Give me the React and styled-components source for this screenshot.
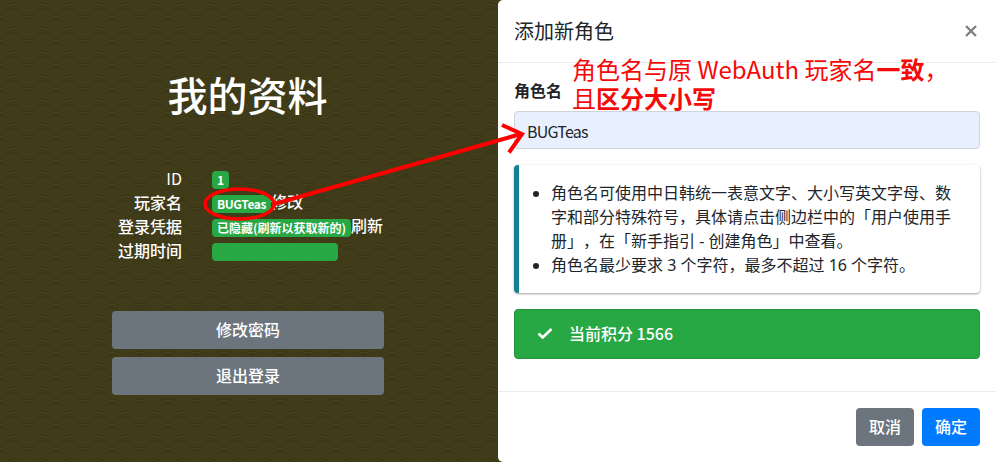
import React from 'react';
import styled, { createGlobalStyle } from 'styled-components';

const wave = encodeURIComponent(
  `<svg xmlns="http://www.w3.org/2000/svg" width="28" height="24" fill="none" stroke="#29260c" stroke-width="1">
    <path d="M3 9Q14-3 25 9M7 10Q14 1 21 10M11 10Q14 6 17 10"/>
    <path d="M-11 21Q0 9 11 21M-7 22Q0 13 7 22M-3 22Q0 18 3 22M17 21Q28 9 39 21M21 22Q28 13 35 22M25 22Q28 18 31 22"/>
    <path stroke="#574a24" stroke-width=".8" d="M3 10Q14-2 25 10M-11 22Q0 10 11 22M17 22Q28 10 39 22"/>
  </svg>`
);

const GlobalStyle = createGlobalStyle`
  *, *::before, *::after { box-sizing: border-box; }
  body {
    margin: 0;
    overflow: hidden;
    font: 400 16px/24px "Noto Sans", "Noto Sans CJK SC", sans-serif;
    color: #212529;
  }
`;

const Page = styled.div`
  position: relative;
  display: flex;
  width: 996px;
  height: 462px;
  background: #3c3918;
`;

const Profile = styled.section`
  width: 498px;
  padding-top: 64px;
  color: #fff;
  background: #403c1a;
  position: relative;
  isolation: isolate;
  &::before {
    content: '';
    position: absolute;
    inset: 0;
    z-index: -1;
    opacity: 0.5;
    background: url("data:image/svg+xml,${wave}");
  }
`;

const ProfileTitle = styled.h1`
  margin: 0 0 42px;
  padding-right: 3px;
  font: 500 40px/60px "Noto Sans CJK SC", sans-serif;
  text-align: center;
`;

const Details = styled.dl`
  display: grid;
  grid-template-columns: 182px 1fr;
  column-gap: 30px;
  grid-auto-rows: 24px;
  margin: 0 0 49px;
`;

const Label = styled.dt`
  text-align: right;
  font-family: "Noto Sans CJK SC", sans-serif;
  font-weight: ${(p) => (p.$light ? 400 : 500)};
`;

const Value = styled.dd`
  display: flex;
  align-items: center;
  margin: 0;
  font-weight: 500;
`;

const Badge = styled.span`
  display: inline-flex;
  align-items: center;
  height: 18px;
  width: ${(p) => p.$width}px;
  padding: 0 5px;
  margin-top: 3px;
  border-radius: 4px;
  background: #28a745;
  font-family: "Noto Sans CJK SC", sans-serif;
  font-size: 12px;
  font-weight: 700;
  letter-spacing: ${(p) => (p.$tight ? '-0.4px' : 'normal')};
  white-space: nowrap;
`;

const Actions = styled.div`
  display: flex;
  flex-direction: column;
  gap: 8px;
  width: 272px;
  margin-left: 112px;
`;

const Button = styled.button`
  height: 38px;
  padding: 0 13px 2px;
  border: 0;
  border-radius: 4px;
  color: #fff;
  background: ${(p) => (p.$primary ? '#007bff' : '#6c757d')};
  font: 500 16px/24px "Noto Sans CJK SC", sans-serif;
`;

const Dialog = styled.section`
  display: flex;
  flex-direction: column;
  width: 498px;
  background: #fff;
  border-radius: 5px 0 0 5px;
`;

const DialogHeader = styled.header`
  display: flex;
  align-items: center;
  justify-content: space-between;
  height: 63px;
  padding: 0 17px 0 16px;
  border-bottom: 1px solid #e9ecef;
`;

const DialogTitle = styled.h2`
  margin: 0;
  font: 400 20px/30px "Noto Sans CJK SC", sans-serif;
`;

const CloseIcon = styled.svg`
  width: 16px;
  height: 16px;
  stroke: #7f7f7f;
  stroke-width: 2.3;
`;

const DialogBody = styled.div`
  flex: 1;
  padding: 16px 16px 0;
`;

const FieldLabel = styled.label`
  display: block;
  margin-bottom: 8px;
  font-weight: 700;
`;

const Field = styled.input`
  display: block;
  width: 100%;
  height: 38px;
  padding: 1px 12px 0;
  border: 1px solid #ced4da;
  border-radius: 4px;
  background: #e8f0fe;
  color: #212529;
  font: 16px "Noto Sans CJK SC", sans-serif;
  letter-spacing: -0.8px;
`;

const Callout = styled.div`
  height: 128px;
  margin: 16px 0;
  padding: 16px 12px 0 0;
  border-left: 5px solid #148090;
  border-radius: 4px;
  box-shadow: 0 1px 3px rgba(0, 0, 0, 0.14), 0 1px 2px rgba(0, 0, 0, 0.24);
`;

const Rules = styled.ul`
  margin: 0;
  padding-left: 32px;
  text-spacing-trim: space-all;
  white-space: nowrap;
`;

const Alert = styled.div`
  display: flex;
  align-items: center;
  height: 50px;
  padding: 0 0 2px 22px;
  gap: 16px;
  border: 1px solid #23923d;
  border-radius: 4px;
  background: #28a745;
  color: #fff;
  font-family: "Noto Sans CJK SC", sans-serif;
  font-weight: 500;
`;

const CheckIcon = styled.svg`
  width: 16px;
  height: 16px;
  fill: none;
  stroke: #fff;
  stroke-width: 2.6;
`;

const DialogFooter = styled.footer`
  display: flex;
  justify-content: flex-end;
  gap: 8px;
  height: 71px;
  padding: 16px 16px 0;
  border-top: 1px solid #e9ecef;
`;

const Note = styled.p`
  position: absolute;
  left: 572px;
  top: 54px;
  margin: 0;
  color: #f50a0a;
  font: 400 24px/29px "Noto Sans CJK SC", sans-serif;
  white-space: nowrap;
`;

const Marks = styled.svg`
  position: absolute;
  inset: 0;
  fill: none;
  stroke: #f00;
  pointer-events: none;
`;

const details = [
  { label: 'ID', value: '1', width: 17, light: true },
  { label: '玩家名', value: 'BUGTeas', width: 59, action: '修改', tight: true },
  { label: '登录凭据', value: '已隐藏(刷新以获取新的)', width: 139, action: '刷新' },
  { label: '过期时间', value: '', width: 126 },
];

export default function App() {
  return (
    <Page>
      <GlobalStyle />
      <Profile>
        <ProfileTitle>我的资料</ProfileTitle>
        <Details>
          {details.map((d) => (
            <React.Fragment key={d.label}>
              <Label $light={d.light}>{d.label}</Label>
              <Value>
                <Badge $width={d.width} $tight={d.tight}>{d.value}</Badge>
                {d.action}
              </Value>
            </React.Fragment>
          ))}
        </Details>
        <Actions>
          <Button>修改密码</Button>
          <Button>退出登录</Button>
        </Actions>
      </Profile>
      <Dialog>
        <DialogHeader>
          <DialogTitle>添加新角色</DialogTitle>
          <CloseIcon viewBox="0 0 16 16">
            <path d="M3 3l10 10M13 3L3 13" />
          </CloseIcon>
        </DialogHeader>
        <DialogBody>
          <FieldLabel htmlFor="role">角色名</FieldLabel>
          <Field id="role" defaultValue="BUGTeas" />
          <Callout>
            <Rules>
              <li>
                角色名可使用中日韩统一表意文字、大小写英文字母、数<br />
                字和部分特殊符号，具体请点击侧边栏中的「用户使用手<br />
                册」，在「新手指引 - 创建角色」中查看。
              </li>
              <li>角色名最少要求 3 个字符，最多不超过 16 个字符。</li>
            </Rules>
          </Callout>
          <Alert>
            <CheckIcon viewBox="0 0 16 16">
              <path d="M1.5 8.5l4.2 4L14.5 4" />
            </CheckIcon>
            <span>当前积分 1566</span>
          </Alert>
        </DialogBody>
        <DialogFooter>
          <Button>取消</Button>
          <Button $primary>确定</Button>
        </DialogFooter>
      </Dialog>
      <Note>
        角色名与原 WebAuth 玩家名<b>一致</b>，<br />
        且<b>区分大小写</b>
      </Note>
      <Marks width="996" height="462">
        <ellipse cx="239.5" cy="204" rx="34.5" ry="15" strokeWidth="3.4" />
        <path d="M274 204L521 134" strokeWidth="4" />
        <path d="M502 125L522 134L509 152.5" strokeWidth="4" />
      </Marks>
    </Page>
  );
}
